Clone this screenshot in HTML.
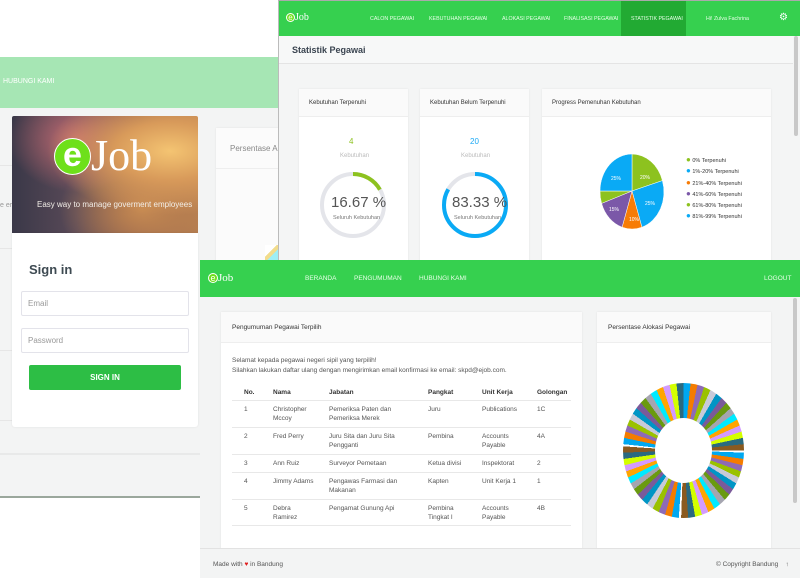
<!DOCTYPE html>
<html><head><meta charset="utf-8"><style>
*{box-sizing:border-box;margin:0;padding:0}
body{width:800px;height:578px;position:relative;overflow:hidden;background:#fff;font-family:"Liberation Sans",sans-serif;color:#444}
.a{position:absolute}
.t{position:absolute;white-space:nowrap}
.logo{position:absolute;display:flex;align-items:center;color:#fff;font-family:"Liberation Serif",serif}
.logo i{display:inline-block;border-radius:50%;background:#6ee01a;border:1px solid #fff;color:#fff;font-style:normal;text-align:center}
.card{position:absolute;background:#fff;box-shadow:0 0 2px rgba(0,0,0,.08)}
.ch{position:absolute;left:0;right:0;top:0;background:#fafafa;border-bottom:1px solid #eee}
.nav{font-size:5.3px;color:#e8ffe8}
</style></head><body>

<div class="a" style="left:0;top:57px;width:280px;height:51px;background:#a6e6b4"></div>
<div class="t" style="left:3px;top:78px;font-size:7px;color:#fff">HUBUNGI KAMI</div>
<div class="a" style="left:0;top:108px;width:280px;height:389px;background:#f3f4f4"></div>
<div class="a" style="left:0;top:165px;width:12px;height:1px;background:#e6e6e6"></div>
<div class="a" style="left:0;top:248px;width:12px;height:1px;background:#e6e6e6"></div>
<div class="a" style="left:0;top:350px;width:12px;height:1px;background:#e6e6e6"></div>
<div class="a" style="left:0;top:420px;width:12px;height:1px;background:#e6e6e6"></div>
<div class="a" style="left:0;top:453px;width:200px;height:2px;background:#e8e9e9"></div>
<div class="a" style="left:0;top:496px;width:200px;height:2px;background:#9aa79c"></div>
<div class="a" style="left:0;top:498px;width:200px;height:80px;background:#fff"></div>
<div class="t" style="left:0;top:202px;font-size:7px;color:#999">e er</div>
<div class="card" style="left:216px;top:128px;width:70px;height:140px;background:#fbfbfb"></div>
<div class="a" style="left:216px;top:168px;width:64px;height:1px;background:#eee"></div>
<div class="t" style="left:230px;top:144px;font-size:8px;color:#888">Persentase Alo</div>
<div class="a" style="left:265px;top:245px;width:14px;height:15px;background:linear-gradient(135deg,#fff 40%,#f2dc8c 40%,#f2dc8c 60%,#9eeef5 60%)"></div>

<div class="a" style="left:12px;top:116px;width:186px;height:117px;border-radius:2px 2px 0 0;background:radial-gradient(ellipse at 85% 30%,#f4c472 0%,#d89a5a 25%,transparent 55%),radial-gradient(ellipse at 35% 20%,#c46a72 0%,transparent 40%),radial-gradient(ellipse at 70% 80%,#c68a52 0%,transparent 45%),linear-gradient(90deg,#3a3848 0%,#5a4a58 35%,#8a5a4a 65%,#b07a50 100%)"></div>
<div class="logo" style="left:54px;top:136px;font-size:44px;line-height:40px">
 <i style="width:37px;height:37px;line-height:33px;font-size:34px;font-family:'Liberation Sans',sans-serif;font-weight:bold">e</i><span>Job</span></div>
<div class="t" style="left:37px;top:200px;font-size:8px;color:#f2eee8">Easy way to manage goverment employees</div>
<div class="card" style="left:12px;top:233px;width:186px;height:194px;border-radius:0 0 3px 3px"></div>
<div class="t" style="left:29px;top:262px;font-size:13px;font-weight:bold;color:#3e4a52">Sign in</div>
<div class="a" style="left:21px;top:291px;width:168px;height:25px;border:1px solid #e3e3ea;border-radius:2px;background:#fff"></div>
<div class="t" style="left:28px;top:299px;font-size:8px;color:#999">Email</div>
<div class="a" style="left:21px;top:328px;width:168px;height:25px;border:1px solid #e3e3ea;border-radius:2px;background:#fff"></div>
<div class="t" style="left:28px;top:336px;font-size:8px;color:#999">Password</div>
<div class="a" style="left:29px;top:365px;width:152px;height:25px;background:#2dbe45;border-radius:2px;color:#fff;font-size:8px;font-weight:bold;text-align:center;line-height:25px">SIGN IN</div>

<div class="a" style="left:278px;top:0;width:522px;height:265px;background:#f4f5f5;border-left:1px solid #bbb;border-top:1px solid #aaa"></div>
<div class="a" style="left:279px;top:1px;width:521px;height:35px;background:#36d04f"></div>
<div class="a" style="left:621px;top:1px;width:65px;height:35px;background:#22aa33"></div>
<div class="logo" style="left:286px;top:12px;font-size:10px"><i style="width:9px;height:9px;line-height:8px;font-size:8px;font-family:'Liberation Sans'">e</i>Job</div>
<div class="t nav" style="left:370px;top:16px">CALON PEGAWAI</div>
<div class="t nav" style="left:429px;top:16px">KEBUTUHAN PEGAWAI</div>
<div class="t nav" style="left:502px;top:16px">ALOKASI PEGAWAI</div>
<div class="t nav" style="left:564px;top:16px">FINALISASI PEGAWAI</div>
<div class="t nav" style="left:631px;top:16px">STATISTIK PEGAWAI</div>
<div class="t nav" style="left:706px;top:16px">Hi! Zulva Fachrina</div>
<div class="t" style="left:779px;top:12px;font-size:10px;color:#fff">⚙</div>
<div class="a" style="left:279px;top:36px;width:514px;height:28px;background:#f7f8f8;border-bottom:1px solid #e4e4e4"></div>
<div class="t" style="left:292px;top:45px;font-size:9px;font-weight:bold;color:#3a4450">Statistik Pegawai</div>
<div class="a" style="left:794px;top:36px;width:4px;height:100px;background:#c8c8c8;border-radius:2px"></div>

<div class="card" style="left:299px;top:89px;width:109px;height:180px"><div class="ch" style="height:28px"></div></div>
<div class="t" style="left:309px;top:100px;font-size:6px;color:#333">Kebutuhan Terpenuhi</div>
<div class="t" style="left:349px;top:137px;font-size:8px;color:#8dc21f">4</div>
<div class="t" style="left:340px;top:153px;font-size:6px;color:#bbb">Kebutuhan</div>
<svg class="a" style="left:319px;top:166px" width="68" height="78"><circle cx="34" cy="39" r="31" fill="none" stroke="#e4e5ea" stroke-width="4"/><circle cx="34" cy="39" r="31" fill="none" stroke="#8dc21f" stroke-width="4" stroke-dasharray="32.5 200" transform="rotate(-90 34 39)"/></svg>
<div class="t" style="left:331px;top:194px;font-size:15px;color:#555">16.67 %</div>
<div class="t" style="left:333px;top:215px;font-size:5.5px;color:#777">Seluruh Kebutuhan</div>

<div class="card" style="left:420px;top:89px;width:109px;height:180px"><div class="ch" style="height:28px"></div></div>
<div class="t" style="left:430px;top:100px;font-size:6px;color:#333">Kebutuhan Belum Terpenuhi</div>
<div class="t" style="left:470px;top:137px;font-size:8px;color:#1aa9f5">20</div>
<div class="t" style="left:461px;top:153px;font-size:6px;color:#bbb">Kebutuhan</div>
<svg class="a" style="left:441px;top:166px" width="68" height="78"><circle cx="34" cy="39" r="31" fill="none" stroke="#e4e5ea" stroke-width="4"/><circle cx="34" cy="39" r="31" fill="none" stroke="#0aaaf5" stroke-width="4" stroke-dasharray="162.3 200" transform="rotate(-90 34 39)"/></svg>
<div class="t" style="left:452px;top:194px;font-size:15px;color:#555">83.33 %</div>
<div class="t" style="left:454px;top:215px;font-size:5.5px;color:#777">Seluruh Kebutuhan</div>

<div class="card" style="left:542px;top:89px;width:229px;height:180px"><div class="ch" style="height:28px"></div></div>
<div class="t" style="left:552px;top:100px;font-size:6px;color:#333">Progress Pemenuhan Kebutuhan</div>
<svg class="a" style="left:596px;top:152px" width="72" height="80" viewBox="-36 -40 72 80" font-size="5" fill="#fff" font-family="Liberation Sans">
<path d="M0 -1 L0 -38 A32 37 0 0 1 30.4 -11.4Z" fill="#8dc21f" stroke="#fff" stroke-width=".5"/>
<path d="M0 -1 L30.4 -11.4 A32 37 0 0 1 9.9 35.2Z" fill="#0aaaf5" stroke="#fff" stroke-width=".5"/>
<path d="M0 -1 L9.9 35.2 A32 37 0 0 1 -9.9 35.2Z" fill="#f77c06" stroke="#fff" stroke-width=".5"/>
<path d="M0 -1 L-9.9 35.2 A32 37 0 0 1 -30.4 11.4Z" fill="#7b58a8" stroke="#fff" stroke-width=".5"/>
<path d="M0 -1 L-30.4 11.4 A32 37 0 0 1 -32 -1Z" fill="#8dc21f" stroke="#fff" stroke-width=".5"/>
<path d="M0 -1 L-32 -1 A32 37 0 0 1 0 -38Z" fill="#0aaaf5" stroke="#fff" stroke-width=".5"/>
<text x="8" y="-13">20%</text><text x="13" y="13">25%</text><text x="-3" y="29">10%</text><text x="-23" y="19">15%</text><text x="-21" y="-12">25%</text></svg>
<div class="a" style="left:686px;top:155px;font-size:5.5px;color:#333;line-height:9.3px">
<div><span style="color:#8dc21f;font-size:8px">●</span> 0% Terpenuhi</div>
<div><span style="color:#0aaaf5;font-size:8px">●</span> 1%-20% Terpenuhi</div>
<div><span style="color:#f77c06;font-size:8px">●</span> 21%-40% Terpenuhi</div>
<div><span style="color:#7b58a8;font-size:8px">●</span> 41%-60% Terpenuhi</div>
<div><span style="color:#8dc21f;font-size:8px">●</span> 61%-80% Terpenuhi</div>
<div><span style="color:#0aaaf5;font-size:8px">●</span> 81%-99% Terpenuhi</div></div>

<div class="a" style="left:200px;top:260px;width:600px;height:318px;background:#f3f4f4"></div>
<div class="a" style="left:200px;top:260px;width:600px;height:37px;background:#36d04f"></div>
<div class="logo" style="left:208px;top:272px;font-size:11px"><i style="width:10px;height:10px;line-height:9px;font-size:9px;font-family:'Liberation Sans'">e</i>Job</div>
<div class="t" style="left:305px;top:275px;font-size:6.5px;color:#e8ffe8">BERANDA</div>
<div class="t" style="left:354px;top:275px;font-size:6.5px;color:#e8ffe8">PENGUMUMAN</div>
<div class="t" style="left:419px;top:275px;font-size:6.5px;color:#e8ffe8">HUBUNGI KAMI</div>
<div class="t" style="left:764px;top:275px;font-size:6.5px;color:#e8ffe8">LOGOUT</div>
<div class="a" style="left:793px;top:298px;width:4px;height:205px;background:#c8c8c8;border-radius:2px"></div>

<div class="card" style="left:221px;top:312px;width:361px;height:240px"><div class="ch" style="height:31px"></div></div>
<div class="t" style="left:232px;top:324px;font-size:6.5px;color:#333">Pengumuman Pegawai Terpilih</div>
<div class="t" style="left:232px;top:356px;font-size:6.5px;color:#555;line-height:10px">Selamat kepada pegawai negeri sipil yang terpilih!<br>Silahkan lakukan daftar ulang dengan mengirimkan email konfirmasi ke email: skpd@ejob.com.</div>
<div class="a" style="left:232px;top:384px;font-size:6.5px;color:#555;line-height:9px">
<div class="t" style="left:12px;top:4px;font-weight:bold;color:#333">No.</div>
<div class="t" style="left:41px;top:4px;font-weight:bold;color:#333">Nama</div>
<div class="t" style="left:97px;top:4px;font-weight:bold;color:#333">Jabatan</div>
<div class="t" style="left:196px;top:4px;font-weight:bold;color:#333">Pangkat</div>
<div class="t" style="left:250px;top:4px;font-weight:bold;color:#333">Unit Kerja</div>
<div class="t" style="left:305px;top:4px;font-weight:bold;color:#333">Golongan</div>
<div class="a" style="left:0;top:16px;width:339px;height:1px;background:#e8e8e8"></div>
<div class="t" style="left:12px;top:21px">1</div><div class="t" style="left:41px;top:21px">Christopher<br>Mccoy</div><div class="t" style="left:97px;top:21px">Pemeriksa Paten dan<br>Pemeriksa Merek</div><div class="t" style="left:196px;top:21px">Juru</div><div class="t" style="left:250px;top:21px">Publications</div><div class="t" style="left:305px;top:21px">1C</div>
<div class="a" style="left:0;top:43px;width:339px;height:1px;background:#e8e8e8"></div>
<div class="t" style="left:12px;top:48px">2</div><div class="t" style="left:41px;top:48px">Fred Perry</div><div class="t" style="left:97px;top:48px">Juru Sita dan Juru Sita<br>Pengganti</div><div class="t" style="left:196px;top:48px">Pembina</div><div class="t" style="left:250px;top:48px">Accounts<br>Payable</div><div class="t" style="left:305px;top:48px">4A</div>
<div class="a" style="left:0;top:70px;width:339px;height:1px;background:#e8e8e8"></div>
<div class="t" style="left:12px;top:75px">3</div><div class="t" style="left:41px;top:75px">Ann Ruiz</div><div class="t" style="left:97px;top:75px">Surveyor Pemetaan</div><div class="t" style="left:196px;top:75px">Ketua divisi</div><div class="t" style="left:250px;top:75px">Inspektorat</div><div class="t" style="left:305px;top:75px">2</div>
<div class="a" style="left:0;top:88px;width:339px;height:1px;background:#e8e8e8"></div>
<div class="t" style="left:12px;top:93px">4</div><div class="t" style="left:41px;top:93px">Jimmy Adams</div><div class="t" style="left:97px;top:93px">Pengawas Farmasi dan<br>Makanan</div><div class="t" style="left:196px;top:93px">Kapten</div><div class="t" style="left:250px;top:93px">Unit Kerja 1</div><div class="t" style="left:305px;top:93px">1</div>
<div class="a" style="left:0;top:115px;width:339px;height:1px;background:#e8e8e8"></div>
<div class="t" style="left:12px;top:120px">5</div><div class="t" style="left:41px;top:120px">Debra<br>Ramirez</div><div class="t" style="left:97px;top:120px">Pengamat Gunung Api</div><div class="t" style="left:196px;top:120px">Pembina<br>Tingkat I</div><div class="t" style="left:250px;top:120px">Accounts<br>Payable</div><div class="t" style="left:305px;top:120px">4B</div>
<div class="a" style="left:0;top:141px;width:339px;height:1px;background:#e8e8e8"></div>
</div>

<div class="card" style="left:597px;top:312px;width:174px;height:240px"><div class="ch" style="height:31px"></div></div>
<div class="t" style="left:608px;top:324px;font-size:6.5px;color:#333">Persentase Alokasi Pegawai</div>
<div class="a" style="left:623px;top:383px;width:121px;height:135px;border-radius:50%;background:repeating-conic-gradient(#00a8f0 0 6deg,#f47c00 6deg 12deg,#8e6ab5 12deg 18deg,#9ac100 18deg 24deg,#c8cad8 24deg 30deg,#0095c5 30deg 36deg,#7a5a9a 36deg 42deg,#6a9a10 42deg 48deg,#a5a5b0 48deg 54deg,#00eaff 54deg 60deg,#ffa500 60deg 66deg,#d39bff 66deg 72deg,#d4ff00 72deg 78deg,#2a6a80 78deg 84deg,#8a5a20 84deg 90deg,#fff 90deg 92deg)"></div>
<div class="a" style="left:655px;top:418px;width:57px;height:65px;border-radius:50%;background:#fff"></div>

<div class="a" style="left:200px;top:548px;width:600px;height:30px;background:#f3f4f4;border-top:1px solid #e2e2e2"></div>
<div class="t" style="left:213px;top:561px;font-size:6.5px;color:#555">Made with <span style="color:#e02020">♥</span> in Bandung</div>
<div class="t" style="left:716px;top:561px;font-size:6.5px;color:#555">© Copyright Bandung &nbsp;&nbsp; ↑</div>
</body></html>
